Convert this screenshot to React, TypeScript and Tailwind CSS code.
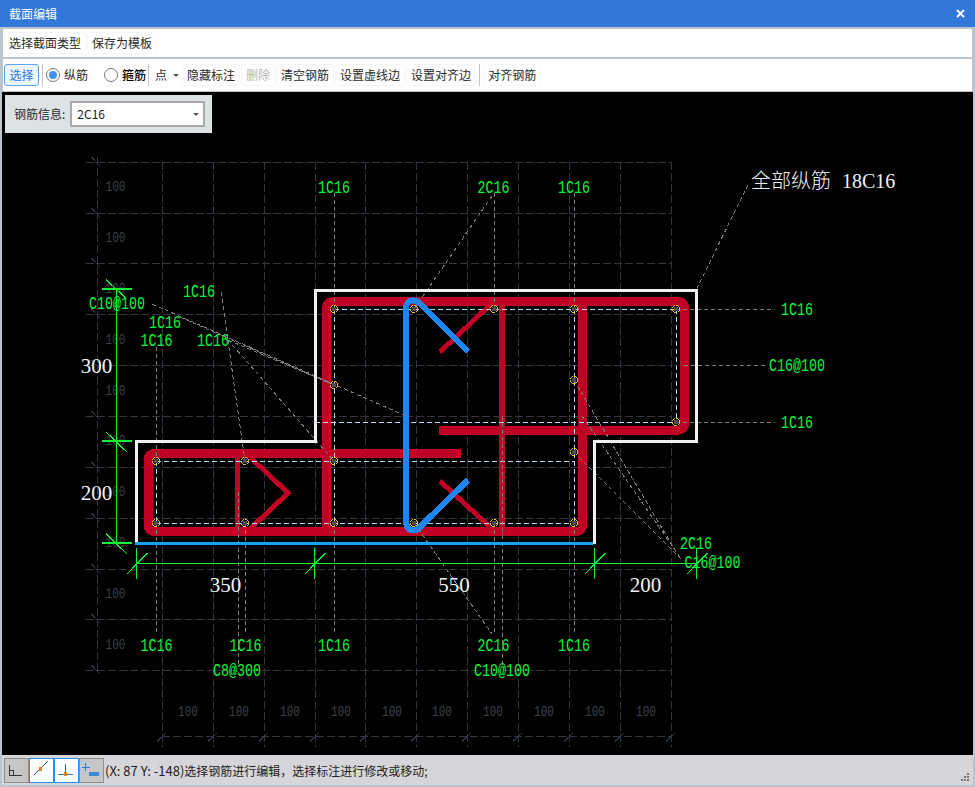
const sans = "font-['Noto_Sans_CJK_SC','Noto_Sans',sans-serif]"

const gridX = [162, 213, 264, 315, 365, 416, 467, 518, 569, 620, 671]
const gridY = [162, 213, 263, 314, 365, 416, 467, 518, 569, 619, 670]
const sideDims = [188, 239, 290, 341, 392, 442, 493, 544, 595, 646]
const baseDims = [188, 239, 290, 341, 392, 442, 493, 544, 595, 646]

const labels: [number, number, string][] = [
  [334, 188, "1C16"],
  [493.5, 188, "2C16"],
  [574, 188, "1C16"],
  [199, 292, "1C16"],
  [117, 304, "C10@100"],
  [165, 323, "1C16"],
  [156.5, 341, "1C16"],
  [213, 341, "1C16"],
  [797, 310, "1C16"],
  [797, 366, "C16@100"],
  [797, 423, "1C16"],
  [696, 544, "2C16"],
  [712.5, 563, "C16@100"],
  [156.5, 646, "1C16"],
  [245.5, 646, "1C16"],
  [334, 646, "1C16"],
  [493.5, 646, "2C16"],
  [574, 646, "1C16"],
  [237, 671, "C8@300"],
  [502, 671, "C10@100"],
]

const sizes: [number, number, string][] = [
  [96.5, 366, "300"],
  [96.5, 493, "200"],
  [225.5, 585, "350"],
  [454, 585, "550"],
  [645.5, 585, "200"],
]

const nodes = [
  [334, 309], [414, 309], [494, 309], [574, 309], [676, 309],
  [334, 385], [574, 380], [574, 452], [676, 422],
  [156, 461], [245, 461], [334, 461],
  [156, 523], [245, 523], [334, 523], [414, 523], [494, 523], [574, 523],
]

// gray callout lines running from each label to its bar
const leaders = [
  [334, 193, 334, 309], [494, 193, 494, 309], [574, 193, 574, 309],
  [492, 196, 414, 309], [748, 185, 697, 288],
  [676, 309, 775, 309], [684, 365, 765, 365], [676, 422, 775, 422],
  [152, 304, 406, 416], [180, 317, 334, 385], [228, 340, 334, 385],
  [228, 340, 334, 461], [221, 292, 245, 461],
  [156.5, 347, 156.5, 461], [156.5, 523, 156.5, 635],
  [245.5, 523, 245.5, 635], [334, 523, 334, 635],
  [494, 523, 494, 635], [574, 523, 574, 635],
  [414, 523, 492, 634],
  [238, 492, 238, 665], [502, 416, 502, 665],
  [574, 380, 672, 545], [582, 416, 682, 560], [574, 452, 682, 560],
]

const inner = [
  [334, 309, 676, 309], [315, 422, 676, 422],
  [156, 461, 574, 461], [156, 523, 574, 523],
  [156, 461, 156, 523], [334, 309, 334, 523],
  [574, 309, 574, 523], [676, 309, 676, 422],
]

function Toolbutton({ label, muted }: { label: string; muted?: boolean }) {
  return (
    <button
      className={`block h-[22px] px-[4px] border border-[#f6f6f6] rounded-[3px] text-[12px] leading-none ${
        muted ? "text-[#b4b4b4]" : "text-[#2a2a2a]"
      }`}
    >
      {label}
    </button>
  )
}

function Radio({ label, checked, bold }: { label: string; checked?: boolean; bold?: boolean }) {
  return (
    <div className="flex items-center gap-[4px]">
      <span className="w-[14px] h-[14px] rounded-full border border-[#777] bg-white flex items-center justify-center">
        {checked && <span className="w-[8px] h-[8px] rounded-full bg-[#3f90f0]" />}
      </span>
      <span className={`text-[12px] leading-none ${bold ? "text-black font-medium" : "text-[#2a2a2a]"}`}>{label}</span>
    </div>
  )
}

function Divider() {
  return <span className="block w-px h-[22px] bg-[#c4c4c4]" />
}

function SnapButton({ active, children }: { active?: boolean; children: React.ReactNode }) {
  return (
    <div
      className={`w-[25px] h-[25px] border-[1.5px] ${
        active ? "bg-white border-[#2a8cf5]" : "bg-[#c6c6c8] border-[#8e8e8e]"
      }`}
    >
      <svg className="block" width="22" height="22" viewBox="0 0 22 22" shapeRendering="crispEdges">
        {children}
      </svg>
    </div>
  )
}

function Drawing() {
  return (
    <svg className="block w-full h-full" viewBox="2 92 971 663" shapeRendering="crispEdges">
      <g stroke="#313741" fill="none" strokeWidth="1" strokeDasharray="8 3">
        <line x1="97" y1="157" x2="97" y2="670" />
        {gridX.map((x) => (
          <line key={x} x1={x} y1="162" x2={x} y2="747" />
        ))}
        {gridY.map((y) => (
          <line key={y} x1="86" y1={y} x2="671" y2={y} />
        ))}
        <line x1="162" y1="736" x2="671" y2="736" />
      </g>
      <g stroke="#313741" strokeWidth="1">
        {gridY.map((y) => (
          <line key={y} x1="91.5" y1={y - 5} x2="100" y2={y + 4} />
        ))}
        {gridX.map((x) => (
          <line key={x} x1={x - 5} y1="741.5" x2={x + 4} y2="733" />
        ))}
      </g>

      <g className="font-['Liberation_Mono',monospace] text-[11px]" fill="#3c4048" textAnchor="middle" dominantBaseline="central">
        {sideDims.map((y) => (
          <text key={y} transform={`translate(115.5 ${y}) scale(1 1.25)`}>100</text>
        ))}
        {baseDims.map((x) => (
          <text key={x} transform={`translate(${x} 713) scale(1 1.25)`}>100</text>
        ))}
      </g>

      <g fill="none" stroke="#c10026" strokeWidth="9">
        <path d="M326.5 535 V307.5 A6 6 0 0 1 332.5 301.5 H678.5 A6 6 0 0 1 684.5 307.5 V424 A6 6 0 0 1 678.5 430 H439" />
        <path d="M461 453.5 H154 A6 6 0 0 0 148 459.5 V525.5 A6 6 0 0 0 154 531.5 H576.5 A6 6 0 0 0 582.5 525.5 V301.5" />
      </g>
      <g fill="none" stroke="#c10026">
        <path d="M502 301 V531" strokeWidth="6" />
        <path d="M237.5 453 V531" strokeWidth="5" />
        <path d="M490 305 L440 352" strokeWidth="5" />
        <path d="M490 527 L440 481" strokeWidth="5" />
        <path d="M250 457 L288 493 L250 529" strokeWidth="5" />
      </g>

      <g stroke="#b4d9fb" strokeWidth="1" strokeDasharray="5 3">
        {inner.map(([x1, y1, x2, y2], i) => (
          <line key={i} x1={x1} y1={y1} x2={x2} y2={y2} />
        ))}
      </g>

      <path
        d="M468 351.5 L420 303.5 Q416.5 300 412 300.5 Q406 301 406 310 V520 Q406 530 413 530.5 Q417 531 420 527 L468 480"
        fill="none"
        stroke="#1d86f0"
        strokeWidth="6"
      />

      <g stroke="#7d7d7d" strokeWidth="1" strokeDasharray="4 3">
        {leaders.map(([x1, y1, x2, y2], i) => (
          <line key={i} x1={x1} y1={y1} x2={x2} y2={y2} />
        ))}
      </g>

      <path d="M136.5 543.5 V441 H315 V290 H696 V441 H594.5 V543.5" fill="none" stroke="#f0f0f0" strokeWidth="3" />
      <path d="M135 543.5 H593" fill="none" stroke="#16a3ee" strokeWidth="3" />

      {nodes.map(([x, y], i) => (
        <g key={i}>
          <circle cx={x} cy={y} r="2.5" fill="#4d4d4d" />
          <circle cx={x} cy={y} r="3.5" fill="none" stroke="#e8c52a" strokeWidth="1" strokeDasharray="3 1" />
        </g>
      ))}

      <g stroke="#12f03c" strokeWidth="1.2">
        <line x1="116.5" y1="289" x2="116.5" y2="543" />
        <line x1="102" y1="289" x2="132" y2="289" />
        <line x1="102" y1="441" x2="132" y2="441" />
        <line x1="102" y1="543" x2="132" y2="543" />
        <line x1="106" y1="279.5" x2="125" y2="297.5" />
        <line x1="106" y1="432" x2="127.5" y2="452.5" />
        <line x1="106" y1="533.5" x2="127.5" y2="554.5" />
        <line x1="136" y1="563.5" x2="697" y2="563.5" />
        {[136.5, 314.5, 594.5, 696.5].map((x) => (
          <g key={x}>
            <line x1={x} y1="548" x2={x} y2="579" />
            <line x1={x - 9.5} y1="574" x2={x + 11} y2="553" />
          </g>
        ))}
      </g>

      <g className="font-['Liberation_Mono',monospace] text-[13.3px]" fill="#0cf53a" textAnchor="middle" dominantBaseline="central">
        {labels.map(([x, y, t], i) => (
          <text key={i} transform={`translate(${x} ${y}) scale(1 1.33)`}>{t}</text>
        ))}
      </g>

      <g className="font-['Liberation_Serif',serif] text-[21px]" fill="#f2f4f8" textAnchor="middle" dominantBaseline="central">
        {sizes.map(([x, y, t], i) => (
          <text key={i} x={x} y={y}>{t}</text>
        ))}
      </g>
      <text
        x="751"
        y="188"
        fill="#eef2f6"
        className="font-['Liberation_Serif','Noto_Sans_CJK_SC',serif] text-[20px] font-light [word-spacing:6px]"
      >
        全部纵筋 18C16
      </text>
    </svg>
  )
}

export default function App() {
  return (
    <div className={`w-[975px] h-[787px] flex flex-col bg-[#bcc4cc] overflow-hidden ${sans}`}>
      <header className="h-[27px] shrink-0 bg-[#3178d8] flex items-center justify-between pl-[9px] pr-[10px] text-white text-[12px]">
        <span>截面编辑</span>
        <svg width="9" height="9" viewBox="0 0 9 9" stroke="white" strokeWidth="2">
          <path d="M1 1 L8 8 M8 1 L1 8" />
        </svg>
      </header>

      <div className="flex-1 flex flex-col min-h-0 pt-[2px] pl-[3px] pr-[3px]">
        <div className="h-[28px] shrink-0 bg-white flex items-center pl-[1px] gap-[1px]">
          <Toolbutton label="选择截面类型" />
          <Toolbutton label="保存为模板" />
        </div>

        <div className="h-[32px] mt-[2px] shrink-0 bg-white flex items-center pl-[1px]">
          <button className="block w-[35px] h-[22px] border border-[#5ea6f0] rounded-[3px] bg-[#edf5fd] text-[#2a7ad8] text-[12px] leading-none">
            选择
          </button>
          <span className="ml-[3px]"><Divider /></span>
          <div className="ml-[3px]"><Radio label="纵筋" checked /></div>
          <div className="ml-[16px]"><Radio label="箍筋" bold /></div>
          <span className="ml-[2px]"><Divider /></span>
          <span className="ml-[6px] text-[12px] leading-none text-[#2a2a2a]">点</span>
          <span className="ml-[6px] mr-[3px] border-x-[3px] border-x-transparent border-t-[3px] border-t-[#555]" />
          <div className="flex items-center gap-[1px]">
            <Toolbutton label="隐藏标注" />
            <Toolbutton label="删除" muted />
            <Toolbutton label="清空钢筋" />
            <Toolbutton label="设置虚线边" />
            <Toolbutton label="设置对齐边" />
          </div>
          <span className="ml-[3px]"><Divider /></span>
          <div className="ml-[3px]"><Toolbutton label="对齐钢筋" /></div>
        </div>

        <div className="relative flex-1 min-h-0 mt-[1px] ml-[-1px] mr-[-1px] bg-black">
          <Drawing />
          <div className="absolute left-[3px] top-[3px] w-[207px] h-[38px] bg-[#dde3e5] flex items-center pl-[9px] gap-[5px]">
            <span className="text-[12px] text-[#2a2a2a]">钢筋信息:</span>
            <div className="w-[135px] h-[26px] bg-white border-2 border-[#a9a9a9] flex items-center justify-between pl-[5px] pr-[4px] text-[12px] text-[#222]">
              <span>2C16</span>
              <span className="border-x-[3px] border-x-transparent border-t-[3px] border-t-[#555]" />
            </div>
          </div>
        </div>
      </div>

      <footer className="h-[30px] shrink-0 mb-[2px] mx-[2px] bg-[#d6d6da] flex items-center justify-between pl-[2px]">
        <div className="flex items-center">
          <SnapButton>
            <path d="M4 5.5 V16.5 H16.5 M4 11 H8.5 V16.5" fill="none" stroke="#333" strokeWidth="1" />
          </SnapButton>
          <SnapButton active>
            <path d="M3.5 16.5 L17.5 2.5" stroke="#3a5f8f" strokeWidth="1" />
            <rect x="8.5" y="8" width="3.5" height="3.5" fill="#f27a2a" />
          </SnapButton>
          <SnapButton active>
            <path d="M10 4.5 V15 M2.5 15 H17.5" stroke="#2d6fb8" strokeWidth="1" fill="none" />
            <rect x="8.5" y="13" width="3.5" height="3.5" fill="#f27a2a" />
          </SnapButton>
          <SnapButton>
            <path d="M5.5 4 V12 M1.5 8 H9.5" stroke="#2d7fd8" strokeWidth="1" fill="none" />
            <rect x="8.5" y="13" width="10" height="3.5" fill="#3a8ad8" />
          </SnapButton>
        </div>
        <span className="flex-1 ml-px text-[12px] leading-none text-[#222] whitespace-nowrap">
          <span className="text-[13px]">(X: 87 Y: -148)</span>选择钢筋进行编辑，选择标注进行修改或移动;
        </span>
        <svg className="mr-[3px] self-end mb-[3px]" width="10" height="10" viewBox="0 0 10 10" fill="#777" shapeRendering="crispEdges">
          <rect x="7" y="1" width="2" height="2" />
          <rect x="4" y="4" width="2" height="2" />
          <rect x="7" y="4" width="2" height="2" />
          <rect x="1" y="7" width="2" height="2" />
          <rect x="4" y="7" width="2" height="2" />
          <rect x="7" y="7" width="2" height="2" />
        </svg>
      </footer>
    </div>
  )
}
